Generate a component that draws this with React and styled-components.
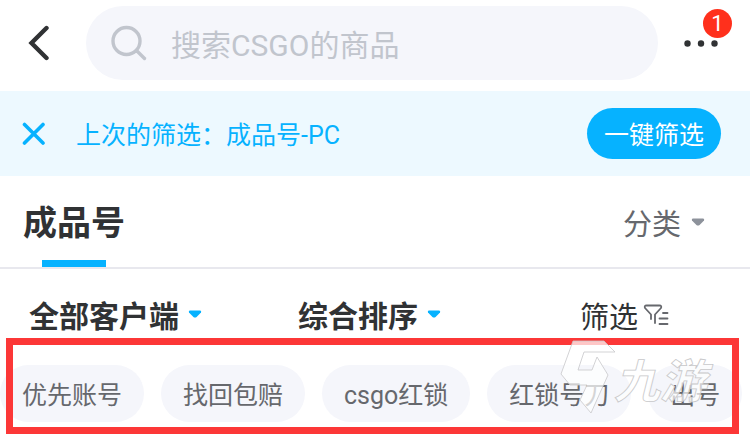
import styled, { createGlobalStyle } from "styled-components";

const GlobalStyle = createGlobalStyle`
  * {
    box-sizing: border-box;
  }
  body {
    margin: 0;
    background: #fff;
    overflow-x: hidden;
    font-family: Roboto, "Noto Sans CJK SC", sans-serif;
  }
  button, input {
    font-family: inherit;
    border: 0;
    padding: 0;
    margin: 0;
    background: none;
  }
  button {
    cursor: pointer;
    white-space: nowrap;
  }
  svg {
    display: block;
    flex: none;
  }
`;

const chips = ["优先账号", "找回包赔", "csgo红锁", "红锁号刀", "出号"];

const Caret = ({ color }) => (
  <svg width="14" height="8" viewBox="0 0 14 8" aria-hidden="true">
    <path d="M2 .5h10q1.8 0 1 2L8.6 7Q7 8 5.4 7L1 2.5Q.2.5 2 .5z" fill={color} />
  </svg>
);

const Watermark = () => (
  <Mark width="160" height="76" viewBox="0 0 160 76" role="img" aria-label="九游">
    <path
      d="M13 1h31l11 11H24l-6 18h14l5-13 11 18-17 38-11-13 7-15H10L1 34z"
      fill="#fff"
      fillOpacity=".72"
      stroke="#c8c8ca"
      strokeWidth=".8"
    />
    <MarkText x="54" y="58">九游</MarkText>
  </Mark>
);

export default function App() {
  return (
    <Page>
      <GlobalStyle />
      <Header>
        <BackButton aria-label="返回">
          <svg width="22" height="36" viewBox="0 0 22 36">
            <path d="M18.500 3L3.500 18l15 15" fill="none" stroke="#303234" strokeWidth="4.400" strokeLinecap="round" />
          </svg>
        </BackButton>
        <SearchBox>
          <svg width="36" height="36" viewBox="0 0 36 36" fill="none" stroke="#c1c5cd" strokeWidth="3.400" strokeLinecap="round">
            <circle cx="15.500" cy="16" r="13.500" />
            <path d="M26 26l7.500 7.500" />
          </svg>
          <SearchInput aria-label="搜索" placeholder="搜索CSGO的商品" />
        </SearchBox>
        <MoreButton aria-label="更多">
          <svg width="34" height="8" viewBox="0 0 34 8" fill="#303234">
            <circle cx="3.500" cy="4.500" r="3.200" />
            <circle cx="17" cy="4.500" r="3.200" />
            <circle cx="30.500" cy="4.500" r="3.200" />
          </svg>
          <Badge>1</Badge>
        </MoreButton>
      </Header>

      <Notice>
        <CloseButton aria-label="关闭">
          <svg width="24" height="24" viewBox="0 0 24 24">
            <path d="M2.500 2.500l18.500 18.500M21 2.500l-18.500 18.500" stroke="#06b2ff" strokeWidth="3.600" strokeLinecap="round" />
          </svg>
        </CloseButton>
        <NoticeText>上次的筛选：成品号-PC</NoticeText>
        <ApplyButton>一键筛选</ApplyButton>
      </Notice>

      <TabBar>
        <Tab>成品号</Tab>
        <CategoryButton>
          分类
          <Caret color="#8d929b" />
        </CategoryButton>
      </TabBar>

      <Filters>
        <FilterButton $bold>
          全部客户端
          <Caret color="#06b2ff" />
        </FilterButton>
        <FilterButton $bold>
          综合排序
          <Caret color="#06b2ff" />
        </FilterButton>
        <FilterButton>
          筛选
          <svg width="26" height="22" viewBox="0 0 26 22" fill="none" stroke="#66686d" strokeWidth="1.800" strokeLinecap="round" strokeLinejoin="round">
            <path d="M8 15v-4.500L2 4Q1 1.500 3.500 1.500h13q2.500 0 1.500 2.500l-6 6.500V19" />
            <path d="M20 9h4.500M16.500 14.500h8M16.500 20h8" />
          </svg>
        </FilterButton>
      </Filters>

      <ChipArea>
        <ChipRow>
          {chips.map((chip) => (
            <Chip key={chip}>{chip}</Chip>
          ))}
        </ChipRow>
        <Frame />
        <Watermark />
      </ChipArea>
    </Page>
  );
}

const Page = styled.div`
  width: 100%;
  padding-bottom: 9px;
  color: #303234;
`;

const Header = styled.header`
  display: flex;
  align-items: center;
  padding: 6px 32px 11px 28px;
`;

const BackButton = styled.button`
  flex: none;
  width: 58px;
`;

const SearchBox = styled.label`
  flex: 1;
  min-width: 0;
  height: 74px;
  padding: 0 25px;
  display: flex;
  align-items: center;
  gap: 24px;
  border-radius: 37px;
  background: #f5f6fb;
`;

const SearchInput = styled.input`
  flex: 1;
  min-width: 0;
  height: 48px;
  padding-top: 4px;
  font-size: 30px;
  color: #303234;
  outline: none;

  &::placeholder {
    color: #c1c5cd;
    opacity: 1;
  }
`;

const MoreButton = styled.button`
  position: relative;
  flex: none;
  height: 40px;
  margin-left: 26px;
`;

const Badge = styled.span`
  position: absolute;
  top: -14px;
  right: -14px;
  width: 29px;
  height: 29px;
  border-radius: 50%;
  background: #ff301c;
  color: #fff;
  font-size: 22px;
  line-height: 30px;
  text-align: center;
`;

const Notice = styled.section`
  display: flex;
  align-items: center;
  height: 85px;
  padding: 0 29px 0 22px;
  background: #edf9ff;
  color: #06b2ff;
  font-size: 25px;
`;

const CloseButton = styled.button`
  flex: none;
  width: 54px;
`;

const NoticeText = styled.span`
  flex: 1;
  padding-bottom: 2px;
  white-space: nowrap;
`;

const ApplyButton = styled.button`
  height: 51px;
  padding: 0 17px 2px;
  border-radius: 26px;
  background: #06b2ff;
  color: #fff;
  font-size: 25px;
`;

const TabBar = styled.nav`
  display: flex;
  justify-content: space-between;
  height: 93px;
  padding: 0 45px 0 23px;
  border-bottom: 2px solid #e8e8ee;
`;

const Tab = styled.button`
  position: relative;
  padding-bottom: 2px;
  color: #303234;
  font-size: 34px;
  font-weight: 700;

  &::after {
    content: "";
    position: absolute;
    left: 19px;
    right: 19px;
    bottom: 0;
    height: 7px;
    background: #06b2ff;
  }
`;

const CategoryButton = styled.button`
  display: flex;
  align-items: center;
  gap: 10px;
  color: #66686d;
  font-size: 29px;
`;

const Filters = styled.div`
  display: grid;
  grid-template-columns: 269fr 282fr 90px;
  align-items: end;
  justify-items: start;
  height: 69px;
  padding: 0 80px 2px 29px;
`;

const FilterButton = styled.button`
  display: flex;
  align-items: center;
  gap: ${({ $bold }) => ($bold ? "9px" : "5px")};
  color: #303234;
  font-size: ${({ $bold }) => ($bold ? "30px" : "29px")};
  font-weight: ${({ $bold }) => ($bold ? 700 : 400)};
`;

const ChipArea = styled.section`
  position: relative;
  padding: 27px 0 12px;
`;

const ChipRow = styled.div`
  display: flex;
  gap: 17px;
  overflow: hidden;
`;

const Chip = styled.button`
  flex: none;
  height: 57px;
  padding: 0 22px 2px;
  border-radius: 29px;
  background: #f5f6fb;
  color: #66686d;
  font-size: 25px;
`;

const Frame = styled.div`
  position: absolute;
  inset: 0 11px 0 6px;
  border: 7px solid #fc3737;
  pointer-events: none;
`;

const Mark = styled.svg`
  position: absolute;
  top: 2px;
  right: 30px;
  pointer-events: none;
`;

const MarkText = styled.text`
  font-family: "Noto Sans CJK SC", sans-serif;
  font-size: 46px;
  font-weight: 700;
  font-style: italic;
  fill: #fff;
  fill-opacity: 0.7;
  stroke: #c8c8ca;
  stroke-width: 0.8px;
`;
